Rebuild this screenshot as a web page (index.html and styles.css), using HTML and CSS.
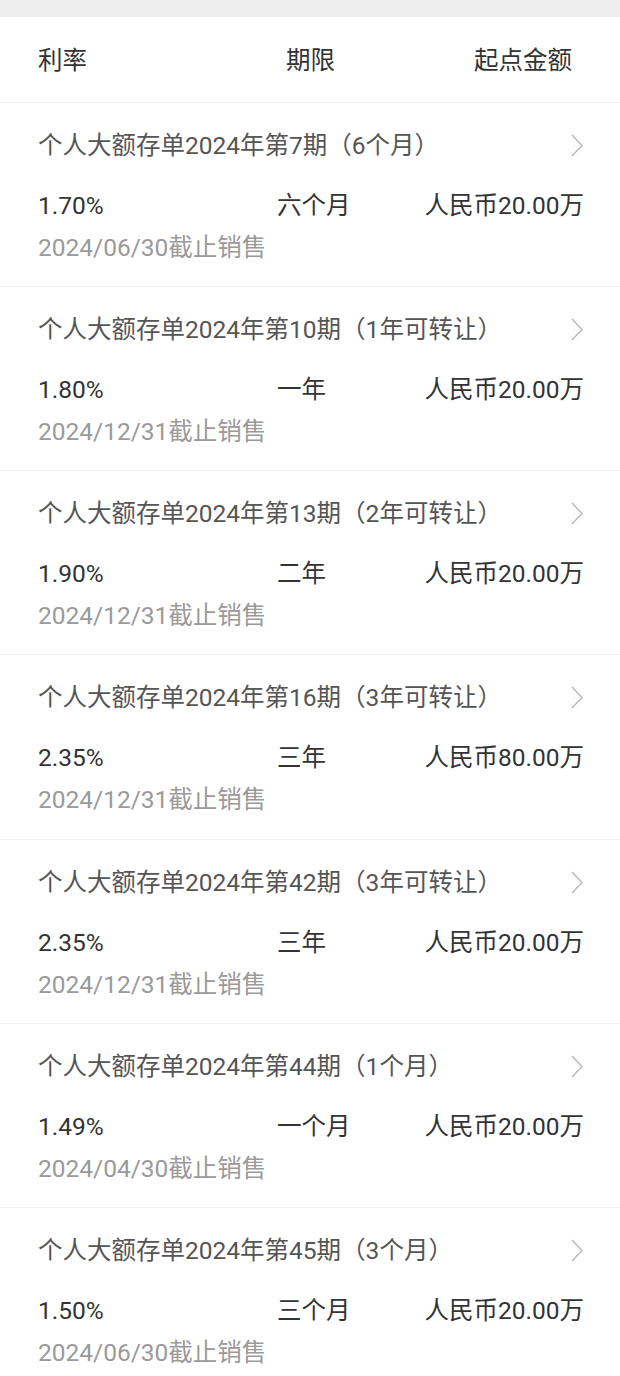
FILE: index.html
```html
<!DOCTYPE html>
<html lang="zh-CN">
<head>
<meta charset="utf-8">
<link rel="stylesheet" href="styles.css">
</head>
<body>
<div class="topbar"></div>
<div class="header">
  <div class="h-rate">利率</div>
  <div class="h-term">期限</div>
  <div class="h-amount">起点金额</div>
</div>
<div class="list">
  <div class="item">
    <div class="title-row"><span class="title">个人大额存单2024年第7期（6个月）</span><svg class="chev" viewBox="0 0 12 23" width="12" height="23"><path d="M1 1 L11 11.5 L1 22" fill="none" stroke="#b8b8b8" stroke-width="1.4"/></svg></div>
    <div class="data-row"><span class="rate">1.70%</span><span class="term">六个月</span><span class="amount">人民币20.00万</span></div>
    <div class="date">2024/06/30截止销售</div>
  </div>
  <div class="item">
    <div class="title-row"><span class="title">个人大额存单2024年第10期（1年可转让）</span><svg class="chev" viewBox="0 0 12 23" width="12" height="23"><path d="M1 1 L11 11.5 L1 22" fill="none" stroke="#b8b8b8" stroke-width="1.4"/></svg></div>
    <div class="data-row"><span class="rate">1.80%</span><span class="term">一年</span><span class="amount">人民币20.00万</span></div>
    <div class="date">2024/12/31截止销售</div>
  </div>
  <div class="item">
    <div class="title-row"><span class="title">个人大额存单2024年第13期（2年可转让）</span><svg class="chev" viewBox="0 0 12 23" width="12" height="23"><path d="M1 1 L11 11.5 L1 22" fill="none" stroke="#b8b8b8" stroke-width="1.4"/></svg></div>
    <div class="data-row"><span class="rate">1.90%</span><span class="term">二年</span><span class="amount">人民币20.00万</span></div>
    <div class="date">2024/12/31截止销售</div>
  </div>
  <div class="item">
    <div class="title-row"><span class="title">个人大额存单2024年第16期（3年可转让）</span><svg class="chev" viewBox="0 0 12 23" width="12" height="23"><path d="M1 1 L11 11.5 L1 22" fill="none" stroke="#b8b8b8" stroke-width="1.4"/></svg></div>
    <div class="data-row"><span class="rate">2.35%</span><span class="term">三年</span><span class="amount">人民币80.00万</span></div>
    <div class="date">2024/12/31截止销售</div>
  </div>
  <div class="item">
    <div class="title-row"><span class="title">个人大额存单2024年第42期（3年可转让）</span><svg class="chev" viewBox="0 0 12 23" width="12" height="23"><path d="M1 1 L11 11.5 L1 22" fill="none" stroke="#b8b8b8" stroke-width="1.4"/></svg></div>
    <div class="data-row"><span class="rate">2.35%</span><span class="term">三年</span><span class="amount">人民币20.00万</span></div>
    <div class="date">2024/12/31截止销售</div>
  </div>
  <div class="item">
    <div class="title-row"><span class="title">个人大额存单2024年第44期（1个月）</span><svg class="chev" viewBox="0 0 12 23" width="12" height="23"><path d="M1 1 L11 11.5 L1 22" fill="none" stroke="#b8b8b8" stroke-width="1.4"/></svg></div>
    <div class="data-row"><span class="rate">1.49%</span><span class="term">一个月</span><span class="amount">人民币20.00万</span></div>
    <div class="date">2024/04/30截止销售</div>
  </div>
  <div class="item">
    <div class="title-row"><span class="title">个人大额存单2024年第45期（3个月）</span><svg class="chev" viewBox="0 0 12 23" width="12" height="23"><path d="M1 1 L11 11.5 L1 22" fill="none" stroke="#b8b8b8" stroke-width="1.4"/></svg></div>
    <div class="data-row"><span class="rate">1.50%</span><span class="term">三个月</span><span class="amount">人民币20.00万</span></div>
    <div class="date">2024/06/30截止销售</div>
  </div>
</div>
</body>
</html>
```

FILE: styles.css
```css
html, body {
  margin: 0;
  padding: 0;
  background: #ffffff;
}
body {
  font-family: "Roboto", "Noto Sans CJK SC", sans-serif;
  font-size: 24.5px;
  line-height: 28px;
  color: #333333;
  overflow: hidden;
}
.topbar {
  height: 17px;
  background: #eeeeee;
}
.header {
  box-sizing: border-box;
  height: 86px;
  display: grid;
  grid-template-columns: 248px auto 1fr;
  align-items: center;
  padding: 3px 48px 0 38px;
  border-bottom: 1px solid #f2f2f2;
  color: #333333;
}
.h-amount {
  text-align: right;
}
.item {
  box-sizing: border-box;
  height: 184.17px;
  padding: 29px 37px 0 38px;
  border-bottom: 1px solid #f2f2f2;
}
.title-row {
  display: flex;
  justify-content: space-between;
  align-items: center;
  height: 28px;
}
.title {
  color: #555555;
}
.chev {
  display: block;
  margin-top: -1px;
}
.data-row {
  display: grid;
  grid-template-columns: 239px 1fr auto;
  margin-top: 32px;
  margin-right: -1px;
  color: #333333;
}
.amount {
  text-align: right;
}
.date {
  margin-top: 14px;
  color: #9a9a9a;
}
```
